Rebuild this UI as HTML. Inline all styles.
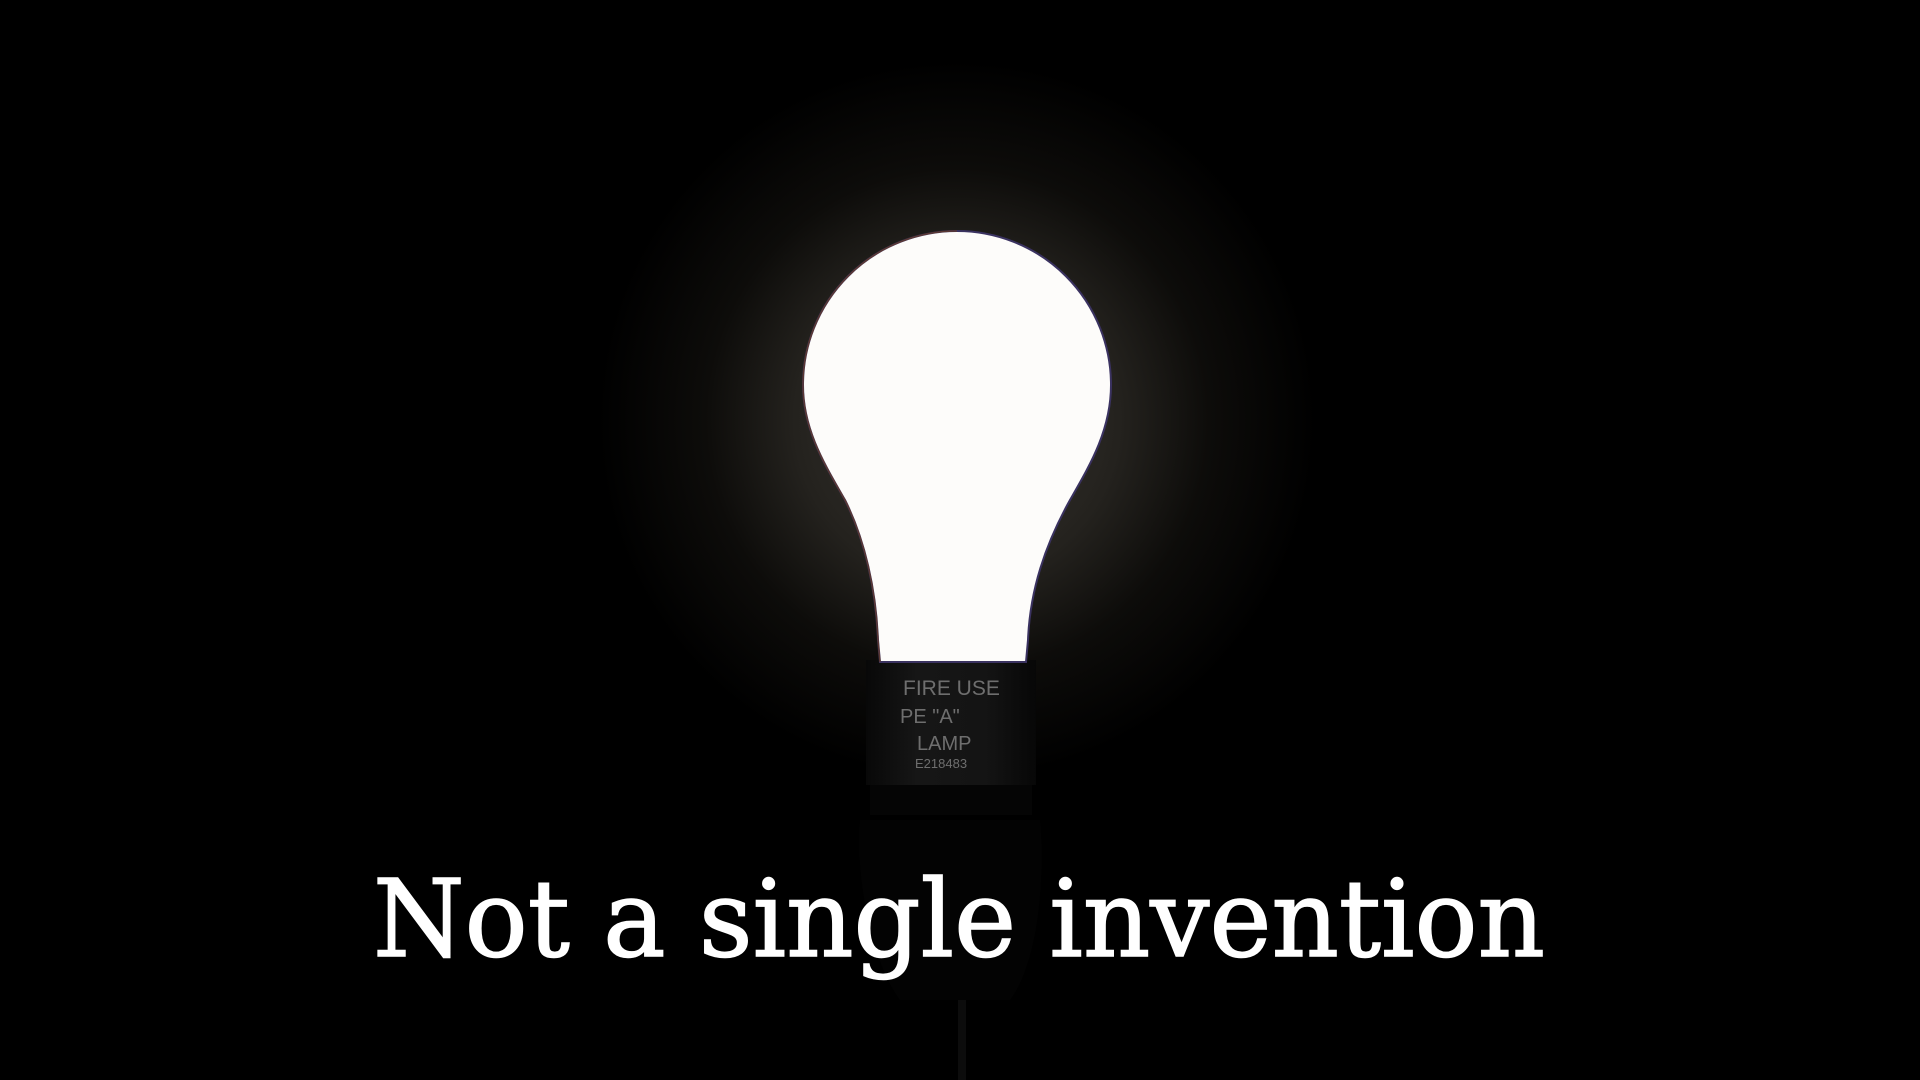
<!DOCTYPE html>
<html><head><meta charset="utf-8"><style>
html,body{margin:0;padding:0;width:1920px;height:1080px;overflow:hidden;background:#000}
svg{display:block}
</style></head><body>
<svg width="1920" height="1080" viewBox="0 0 1920 1080" xmlns="http://www.w3.org/2000/svg">
<defs>
<radialGradient id="glow" cx="957" cy="420" r="360" gradientUnits="userSpaceOnUse">
<stop offset="0" stop-color="#3a3732"/>
<stop offset="0.45" stop-color="#24221e"/>
<stop offset="0.7" stop-color="#0d0c0a"/>
<stop offset="1" stop-color="#000"/>
</radialGradient>
<linearGradient id="base" x1="0" x2="1">
<stop offset="0" stop-color="#080808"/>
<stop offset="0.3" stop-color="#161616"/>
<stop offset="0.7" stop-color="#141414"/>
<stop offset="1" stop-color="#070707"/>
</linearGradient>
</defs>
<rect width="1920" height="1080" fill="#000"/>
<rect width="1920" height="1080" fill="url(#glow)"/>
<rect x="866" y="660" width="170" height="125" fill="url(#base)"/>
<rect x="870" y="785" width="162" height="30" fill="#050505"/>
<path d="M860,820 C855,870 870,960 900,1000 L1010,1000 C1040,960 1045,870 1040,820 Z" fill="#030303"/>
<rect x="958" y="1000" width="8" height="80" fill="#0c0c0c"/>
<g font-family="Liberation Sans Narrow, Liberation Sans, sans-serif" fill="#6e6e6e">
<text x="903" y="695" font-size="21">FIRE USE</text>
<text x="900" y="723" font-size="20">PE "A"</text>
<text x="917" y="750" font-size="20">LAMP</text>
<text x="915" y="768" font-size="13">E218483</text>
</g>
<path d="M880,662 L878,640 C876,590 865,540 845,500 C825,465 803,430 803,385 A154,154 0 0 1 1111,385 C1111,430 1090,465 1070,500 C1045,545 1030,590 1028,640 L1026,662 Z" fill="#fdfcfa" stroke="#3a3260" stroke-width="2"/>
<path d="M880,662 L878,640 C876,590 865,540 845,500 C825,465 803,430 803,385 A154,154 0 0 1 957,231" fill="none" stroke="#6a3a20" stroke-width="1.5" opacity="0.7"/>
<text x="373" y="956" font-family="DejaVu Serif, serif" font-size="107" fill="#fff" stroke="#fff" stroke-width="1.5" textLength="1172" lengthAdjust="spacingAndGlyphs">Not a single invention</text>
</svg>
</body></html>
